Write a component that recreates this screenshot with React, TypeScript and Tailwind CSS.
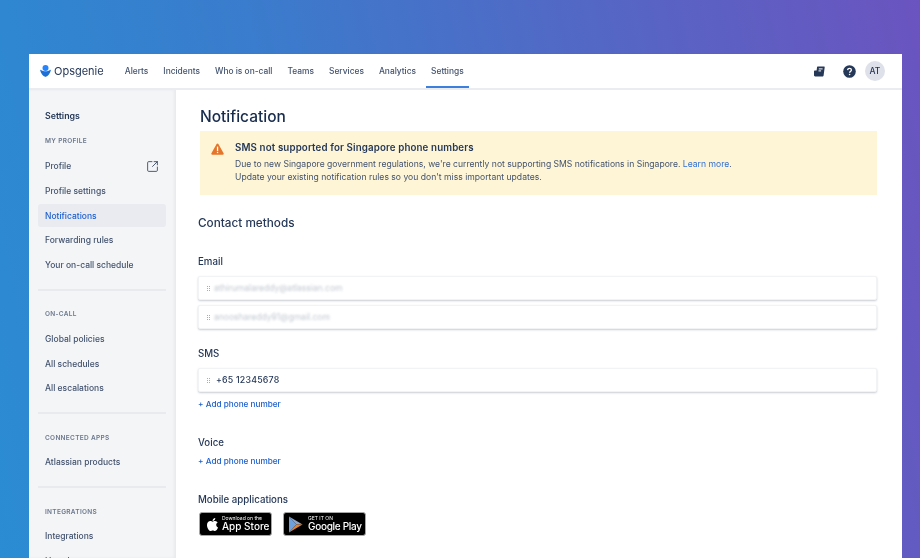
import { FaApple } from "react-icons/fa";
import { SquareArrowOutUpRight } from "lucide-react";

const NAV = ["Alerts", "Incidents", "Who is on-call", "Teams", "Services", "Analytics", "Settings"];

function SideItem({ label, active, icon }: { label: string; active?: boolean; icon?: boolean }) {
  return (
    <div
      className={`h-[23px] mb-[1.7px] px-[7px] flex items-center justify-between rounded-[3px] text-[8.5px] font-medium ${
        active ? "bg-[#e9ebf0] text-[#1d5fce]" : "text-[#42526e]"
      }`}
    >
      <span>{label}</span>
      {icon && <SquareArrowOutUpRight size={13} strokeWidth={1.6} className="text-[#344563]" />}
    </div>
  );
}

function SideHeading({ label }: { label: string }) {
  return <div className="px-[7px] text-[6.5px] leading-[10px] font-semibold tracking-[0.3px] text-[#6b778c]">{label}</div>;
}

function Divider() {
  return <div className="h-[2px] bg-[#e8eaee]" />;
}

function ContactRow({ text, blurred }: { text: string; blurred?: boolean }) {
  return (
    <div className="h-[24px] flex items-center gap-[3px] pl-[8px] rounded-[2px] bg-white border border-[#f2f3f5] shadow-[0_1px_2px_rgba(9,30,66,0.22)]">
      <span className="grid grid-cols-2 gap-[1px] w-[3px] mr-[3px] shrink-0">
        {[0, 1, 2, 3, 4, 5].map((i) => (
          <span key={i} className="w-[1px] h-[1px] bg-[#a5adba]" />
        ))}
      </span>
      <span className={blurred ? "-ml-[2px] text-[8.5px] blur-[1.2px] text-[#c1c7d0]" : "text-[8.8px] text-[#253858] font-medium tracking-[0.2px]"}>{text}</span>
    </div>
  );
}

function AddPhone() {
  return <div className="text-[8.2px] leading-[12px] font-medium text-[#1d5fce]">+ Add phone number</div>;
}

function Label({ children }: { children: string }) {
  return <div className="text-[9.7px] leading-[14px] font-medium text-[#253858]">{children}</div>;
}

export default function App() {
  return (
    <div
      className="w-[920px] h-[558px] overflow-hidden pt-[54px] pl-[29px] pr-[18px] bg-[linear-gradient(78deg,#2a8cd3_0%,#3a7ccd_35%,#5566c4_70%,#6b54bf_100%)]"
      style={{ fontFamily: "Inter, 'Liberation Sans', sans-serif" }}
    >
      <div className="h-[504px] bg-white flex flex-col overflow-hidden blur-[0.3px]">
        <header className="h-[36px] shrink-0 flex items-center border-b-2 border-[#ebecf0] pl-[11px] pr-[17px]">
          <svg width="11" height="12" viewBox="0 0 11 12" className="mr-[3px]">
            <circle cx="5.5" cy="3" r="3" fill="#2684ff" />
            <path d="M0.2 5.4 C0.1 5 0.5 4.7 0.9 4.9 C3.5 6.6 7.5 6.6 10.1 4.9 C10.5 4.7 10.9 5 10.8 5.4 C10.2 8.2 8 10.9 5.9 11.8 C5.6 11.9 5.4 11.9 5.1 11.8 C3 10.9 0.8 8.2 0.2 5.4 Z" fill="#1d6fd6" />
          </svg>
          <span className="text-[11px] font-normal text-[#253858] mr-[16px]">Opsgenie</span>
          <nav className="flex h-full gap-[5px]">
            {NAV.map((n) => (
              <div
                key={n}
                className={`h-full px-[5px] pt-[2px] mb-[-2px] flex items-center text-[8.4px] font-medium text-[#42526e] border-b-2 ${
                  n === "Settings" ? "border-[#3d7fdc]" : "border-transparent"
                }`}
              >
                {n}
              </div>
            ))}
          </nav>
          <div className="ml-auto flex items-center">
            <svg width="11" height="11" viewBox="0 0 11 11" className="mr-[18px]">
              <path d="M3 1.6 C3 1 3.4 .6 4 .6 H10.2 C10.6 .6 10.8 .9 10.7 1.3 L9.6 9.4 C9.5 10 9 10.4 8.4 10.4 H1.2 C.5 10.4 0 9.9 0 9.2 V5.6 C0 5 .4 4.6 1 4.6 H2.6 Z" fill="#253858" />
              <rect x="4.8" y="2.4" width="3.8" height="1" fill="#fff" />
              <rect x="4.5" y="4.4" width="2.6" height="1" fill="#fff" />
            </svg>
            <svg width="13" height="13" viewBox="0 0 13 13" className="mr-[9px]">
              <circle cx="6.5" cy="6.5" r="6.3" fill="#253858" />
              <path d="M4.6 5.1 C4.7 4 5.5 3.4 6.5 3.4 C7.6 3.4 8.4 4.1 8.4 5 C8.4 6.4 6.6 6.3 6.6 7.7" fill="none" stroke="#fff" strokeWidth="1.3" />
              <circle cx="6.6" cy="9.5" r="0.8" fill="#fff" />
            </svg>
            <div className="w-[20px] h-[20px] rounded-full bg-[#dfe1ea] flex items-center justify-center text-[8.5px] font-medium text-[#253858]">AT</div>
          </div>
        </header>

        <div className="flex flex-1 min-h-0">
          <aside className="w-[147px] shrink-0 bg-[#f4f5f7] shadow-[inset_-2px_0_3px_rgba(9,30,66,0.05)] pl-[9px] pr-[10px] pt-[20px] overflow-hidden">
            <div className="px-[7px] text-[8.8px] leading-[12px] font-semibold text-[#253858] mb-[14px]">Settings</div>
            <SideHeading label="MY PROFILE" />
            <div className="mt-[9px] mb-[12px]">
              <SideItem label="Profile" icon />
              <SideItem label="Profile settings" />
              <SideItem label="Notifications" active />
              <SideItem label="Forwarding rules" />
              <SideItem label="Your on-call schedule" />
            </div>
            <Divider />
            <div className="mt-[18px]"><SideHeading label="ON-CALL" /></div>
            <div className="mt-[9px] mb-[12px]">
              <SideItem label="Global policies" />
              <SideItem label="All schedules" />
              <SideItem label="All escalations" />
            </div>
            <Divider />
            <div className="mt-[19px]"><SideHeading label="CONNECTED APPS" /></div>
            <div className="mt-[8px] mb-[12px]">
              <SideItem label="Atlassian products" />
            </div>
            <Divider />
            <div className="mt-[19px]"><SideHeading label="INTEGRATIONS" /></div>
            <div className="mt-[8px]">
              <SideItem label="Integrations" />
              <SideItem label="Heartbeats" />
            </div>
          </aside>

          <main className="flex-1 min-w-0 pl-[22px] pr-[25px] pt-[17px]">
            <h1 className="pl-[2px] text-[15.5px] leading-[20px] font-medium text-[#172b4d]">Notification</h1>
            <div className="ml-[2px] mt-[4px] h-[64px] bg-[#fef5d6] flex pl-[11px] pt-[10px]">
              <svg width="13" height="12" viewBox="0 0 13 12" className="mt-[2px] shrink-0">
                <path d="M5.6 .9 C6 .2 7 .2 7.4 .9 L12.6 10.2 C13 10.9 12.5 11.7 11.7 11.7 H1.3 C.5 11.7 0 10.9 .4 10.2 Z" fill="#e5752a" />
                <rect x="5.9" y="3.6" width="1.3" height="4.4" fill="#fff" />
                <rect x="5.9" y="8.8" width="1.3" height="1.3" fill="#fff" />
              </svg>
              <div className="ml-[11px]">
                <div className="text-[9.75px] leading-[14px] font-semibold text-[#253858] tracking-[0.12px]">SMS not supported for Singapore phone numbers</div>
                <div className="mt-[3px] text-[8.6px] leading-[13px] text-[#42526e]">
                  Due to new Singapore government regulations, we're currently not supporting SMS notifications in Singapore. <span className="text-[#2f6fd6]">Learn more</span>.
                  <br />
                  Update your existing notification rules so you don't miss important updates.
                </div>
              </div>
            </div>
            <h2 className="mt-[19px] text-[11.75px] leading-[18px] font-medium text-[#253858]">Contact methods</h2>
            <div className="mt-[23px]"><Label>Email</Label></div>
            <div className="mt-[7px] flex flex-col gap-[5px]">
              <ContactRow text="athirumalareddy@atlassian.com" blurred />
              <ContactRow text="anooshareddy91@gmail.com" blurred />
            </div>
            <div className="mt-[18px]"><Label>SMS</Label></div>
            <div className="mt-[7px]"><ContactRow text="+65 12345678" /></div>
            <div className="mt-[6px]"><AddPhone /></div>
            <div className="mt-[26px]"><Label>Voice</Label></div>
            <div className="mt-[5px]"><AddPhone /></div>
            <div className="mt-[26px]"><Label>Mobile applications</Label></div>
            <div className="mt-[5px] flex gap-[11px] pl-[1px]">
              <div className="w-[73px] h-[24px] bg-black rounded-[3px] border border-[#a6a6a6] flex items-center pl-[5px] text-white whitespace-nowrap">
                <FaApple size={15} />
                <div className="ml-[2px]">
                  <div className="text-[5px] leading-[5px]">Download on the</div>
                  <div className="text-[10px] leading-[11px] font-medium">App Store</div>
                </div>
              </div>
              <div className="w-[83px] h-[24px] bg-black rounded-[3px] border border-[#a6a6a6] flex items-center pl-[5px] text-white whitespace-nowrap">
                <svg width="14" height="17" viewBox="0 0 15 17" className="shrink-0">
                  <path d="M0 0 L8 8.5 L0 17 Z" fill="#6ea0dc" />
                  <path d="M0 0 L14.5 8.5 L8 8.5 Z" fill="#8fa6c8" />
                  <path d="M0 17 L14.5 8.5 L8 8.5 Z" fill="#e5812a" />
                </svg>
                <div className="ml-[5px]">
                  <div className="text-[5px] leading-[5px]">GET IT ON</div>
                  <div className="text-[10px] leading-[11px] font-medium tracking-[-0.3px]">Google Play</div>
                </div>
              </div>
            </div>
          </main>
        </div>
      </div>
    </div>
  );
}
